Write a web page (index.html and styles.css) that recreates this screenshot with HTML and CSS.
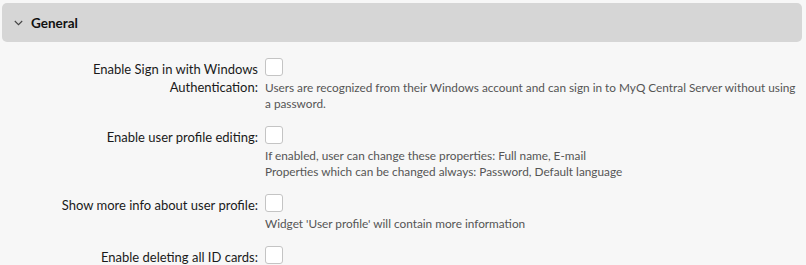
FILE: index.html
```html
<!DOCTYPE html>
<html>
<head>
<meta charset="utf-8">
<link rel="stylesheet" href="styles.css">
</head>
<body>
<div class="panel">
  <div class="header">
    <svg class="chev" width="9" height="6" viewBox="0 0 9 6"><path d="M0.8 1 L4.5 4.7 L8.2 1" fill="none" stroke="#444" stroke-width="1.1"/></svg>
    <span class="title">General</span>
  </div>
  <div class="form">
    <div class="row">
      <label class="label">Enable Sign in with Windows Authentication:</label>
      <div class="field">
        <span class="cb"></span>
        <div class="help">Users are recognized from their Windows account and can sign in to MyQ Central Server without using a&nbsp;password.</div>
      </div>
    </div>
    <div class="row">
      <label class="label">Enable user profile editing:</label>
      <div class="field">
        <span class="cb"></span>
        <div class="help">If enabled, user can change these properties: Full name, E-mail<br>Properties which can be changed always: Password, Default language</div>
      </div>
    </div>
    <div class="row">
      <label class="label">Show more info about user profile:</label>
      <div class="field">
        <span class="cb"></span>
        <div class="help">Widget 'User profile' will contain more information</div>
      </div>
    </div>
    <div class="row">
      <label class="label">Enable deleting all ID cards:</label>
      <div class="field">
        <span class="cb"></span>
      </div>
    </div>
  </div>
</div>
</body>
</html>
```
FILE: styles.css
```css
html, body {
  margin: 0;
  background: #f7f7f7;
}
body {
  font-family: "Lato", "Open Sans", sans-serif;
  color: #1a1a1a;
  padding: 3px 4px 0 2px;
}
.header {
  height: 39px;
  background: #d6d6d6;
  border-radius: 5px;
  display: flex;
  align-items: center;
  padding-left: 12px;
  gap: 8px;
}
.title {
  font-weight: 700;
  font-size: 13.5px;
  color: #111;
}
.form {
  padding: 16px 0 0 52px;
}
.row {
  display: grid;
  grid-template-columns: 204px 1fr;
  column-gap: 7px;
  margin-bottom: 14px;
}
.label {
  text-align: right;
  font-size: 13px;
  line-height: 18px;
  padding-top: 2px;
  color: #1a1a1a;
}
.cb {
  display: block;
  width: 16px;
  height: 16px;
  border: 1px solid #c4c4c4;
  border-radius: 3px;
  background: #fff;
}
.help {
  font-size: 11.8px;
  line-height: 16px;
  color: #555;
  margin-top: 4px;
}
```
